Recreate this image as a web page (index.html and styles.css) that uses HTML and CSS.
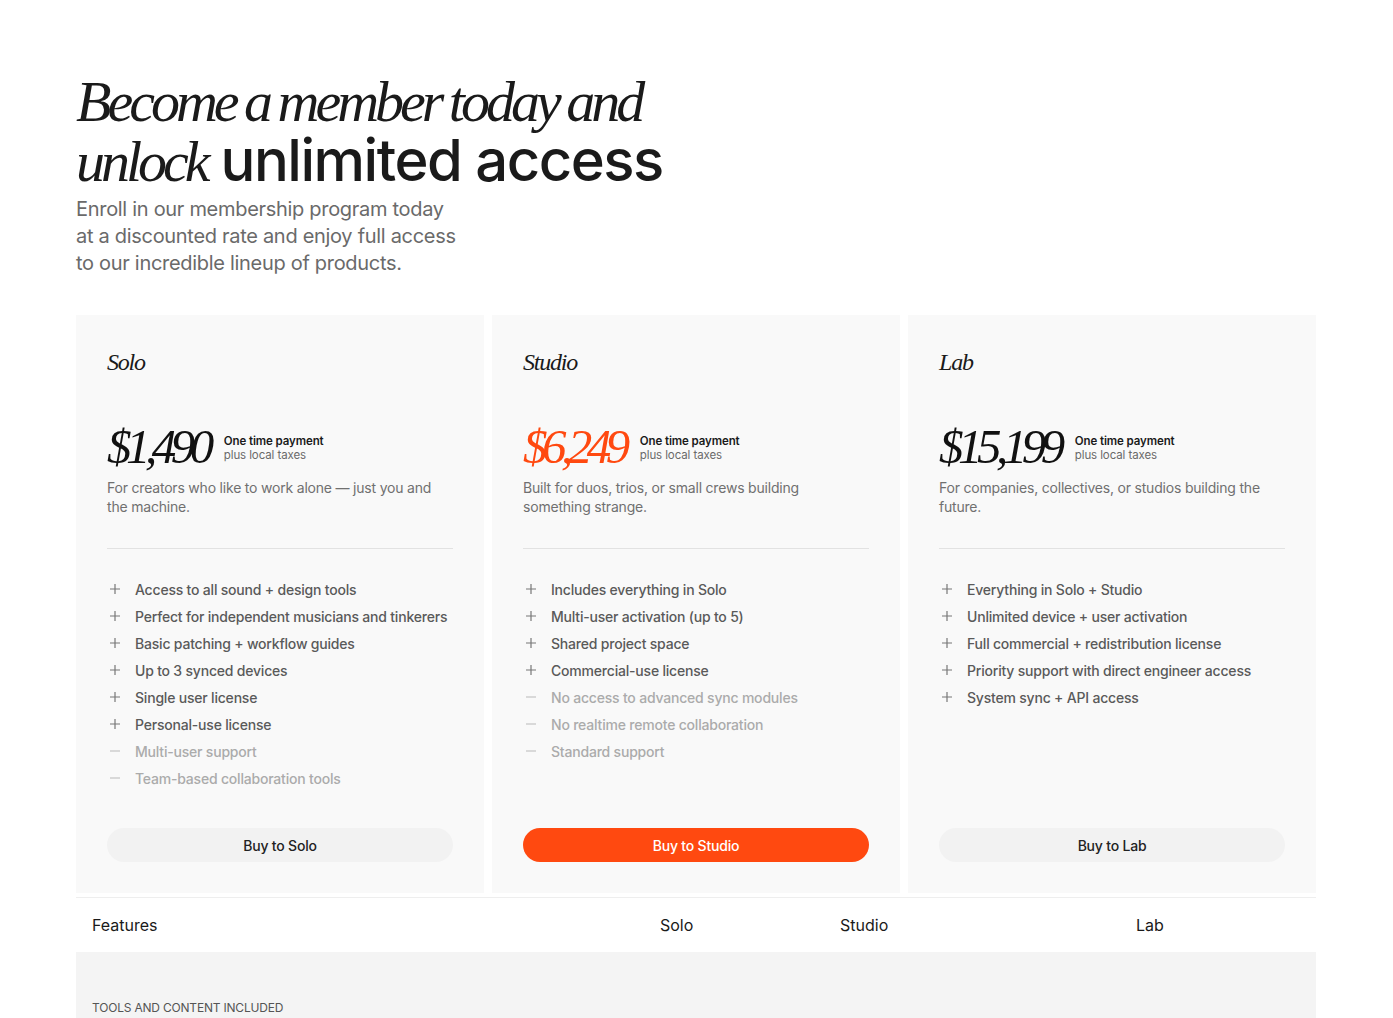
FILE: index.html
```html
<!DOCTYPE html>
<html lang="en">
<head>
<meta charset="utf-8">
<title>Membership</title>
<link rel="stylesheet" href="styles.css">
</head>
<body>
<main class="page">
  <header class="hero">
    <h1 class="hero-title"><span class="serif">Become a member today and</span><br><span class="serif">unlock</span> unlimited access</h1>
    <p class="hero-sub">Enroll in our membership program today<br>at a discounted rate and enjoy full access<br>to our incredible lineup of products.</p>
  </header>

  <section class="plans">
    <article class="plan">
      <h2 class="plan-name">Solo</h2>
      <div class="price-row">
        <span class="price">$1,490</span>
        <div class="price-note"><strong>One time payment</strong><span>plus local taxes</span></div>
      </div>
      <p class="plan-desc">For creators who like to work alone — just you and the machine.</p>
      <hr class="divider">
      <ul class="features">
        <li class="yes"><span class="ico"><svg viewBox="0 0 10 10"><path d="M5 0v10M0 5h10"/></svg></span>Access to all sound + design tools</li>
        <li class="yes"><span class="ico"><svg viewBox="0 0 10 10"><path d="M5 0v10M0 5h10"/></svg></span>Perfect for independent musicians and tinkerers</li>
        <li class="yes"><span class="ico"><svg viewBox="0 0 10 10"><path d="M5 0v10M0 5h10"/></svg></span>Basic patching + workflow guides</li>
        <li class="yes"><span class="ico"><svg viewBox="0 0 10 10"><path d="M5 0v10M0 5h10"/></svg></span>Up to 3 synced devices</li>
        <li class="yes"><span class="ico"><svg viewBox="0 0 10 10"><path d="M5 0v10M0 5h10"/></svg></span>Single user license</li>
        <li class="yes"><span class="ico"><svg viewBox="0 0 10 10"><path d="M5 0v10M0 5h10"/></svg></span>Personal-use license</li>
        <li class="no"><span class="ico"><svg viewBox="0 0 10 10"><path d="M0 5h10"/></svg></span>Multi-user support</li>
        <li class="no"><span class="ico"><svg viewBox="0 0 10 10"><path d="M0 5h10"/></svg></span>Team-based collaboration tools</li>
      </ul>
      <button class="buy">Buy to Solo</button>
    </article>

    <article class="plan">
      <h2 class="plan-name">Studio</h2>
      <div class="price-row">
        <span class="price accent">$6,249</span>
        <div class="price-note"><strong>One time payment</strong><span>plus local taxes</span></div>
      </div>
      <p class="plan-desc">Built for duos, trios, or small crews building something strange.</p>
      <hr class="divider">
      <ul class="features">
        <li class="yes"><span class="ico"><svg viewBox="0 0 10 10"><path d="M5 0v10M0 5h10"/></svg></span>Includes everything in Solo</li>
        <li class="yes"><span class="ico"><svg viewBox="0 0 10 10"><path d="M5 0v10M0 5h10"/></svg></span>Multi-user activation (up to 5)</li>
        <li class="yes"><span class="ico"><svg viewBox="0 0 10 10"><path d="M5 0v10M0 5h10"/></svg></span>Shared project space</li>
        <li class="yes"><span class="ico"><svg viewBox="0 0 10 10"><path d="M5 0v10M0 5h10"/></svg></span>Commercial-use license</li>
        <li class="no"><span class="ico"><svg viewBox="0 0 10 10"><path d="M0 5h10"/></svg></span>No access to advanced sync modules</li>
        <li class="no"><span class="ico"><svg viewBox="0 0 10 10"><path d="M0 5h10"/></svg></span>No realtime remote collaboration</li>
        <li class="no"><span class="ico"><svg viewBox="0 0 10 10"><path d="M0 5h10"/></svg></span>Standard support</li>
      </ul>
      <button class="buy primary">Buy to Studio</button>
    </article>

    <article class="plan">
      <h2 class="plan-name">Lab</h2>
      <div class="price-row">
        <span class="price">$15,199</span>
        <div class="price-note"><strong>One time payment</strong><span>plus local taxes</span></div>
      </div>
      <p class="plan-desc">For companies, collectives, or studios building the future.</p>
      <hr class="divider">
      <ul class="features">
        <li class="yes"><span class="ico"><svg viewBox="0 0 10 10"><path d="M5 0v10M0 5h10"/></svg></span>Everything in Solo + Studio</li>
        <li class="yes"><span class="ico"><svg viewBox="0 0 10 10"><path d="M5 0v10M0 5h10"/></svg></span>Unlimited device + user activation</li>
        <li class="yes"><span class="ico"><svg viewBox="0 0 10 10"><path d="M5 0v10M0 5h10"/></svg></span>Full commercial + redistribution license</li>
        <li class="yes"><span class="ico"><svg viewBox="0 0 10 10"><path d="M5 0v10M0 5h10"/></svg></span>Priority support with direct engineer access</li>
        <li class="yes"><span class="ico"><svg viewBox="0 0 10 10"><path d="M5 0v10M0 5h10"/></svg></span>System sync + API access</li>
      </ul>
      <button class="buy">Buy to Lab</button>
    </article>
  </section>

  <section class="compare">
    <div class="compare-head">
      <div class="cell">Features</div>
      <div class="cell">Solo</div>
      <div class="cell">Studio</div>
      <div class="cell">Lab</div>
    </div>
    <div class="compare-group">Tools and content included</div>
  </section>
</main>
</body>
</html>
```

FILE: styles.css
```css
* { box-sizing: border-box; }
html, body { margin: 0; padding: 0; background: #ffffff; }
body {
  font-family: Inter, "Noto Sans", "Liberation Sans", sans-serif;
  color: #1a1a1a;
}
.page {
  width: 1240px;
  margin-left: 76px;
  padding-top: 71px;
}

.hero-title {
  margin: 0;
  font-family: Inter, "Liberation Sans", sans-serif;
  font-weight: 500;
  font-size: 58px;
  line-height: 58px;
  letter-spacing: -1.5px;
  color: #1a1a1a;
}
.hero-title .serif {
  font-family: "Liberation Serif", serif;
  font-style: italic;
  font-weight: 400;
  letter-spacing: -4px;
  word-spacing: -2px;
}
.hero-sub {
  margin: 5px 0 0;
  font-size: 20px;
  line-height: 27px;
  letter-spacing: -0.3px;
  color: #6a6a6a;
}

.plans {
  margin-top: 38px;
  display: grid;
  grid-template-columns: repeat(3, 1fr);
  gap: 8px;
}
.plan {
  background: #f9f9f9;
  padding: 31px 31px 31px;
  display: flex;
  flex-direction: column;
}
.plan-name {
  margin: 0;
  font-family: "Liberation Serif", serif;
  font-style: italic;
  font-weight: 400;
  font-size: 24px;
  line-height: 32px;
  letter-spacing: -1.2px;
  color: #1a1a1a;
}
.price-row {
  margin-top: 43px;
  display: flex;
  align-items: center;
  gap: 15px;
}
.price {
  font-family: "Liberation Serif", serif;
  font-style: italic;
  font-size: 49px;
  line-height: 52px;
  letter-spacing: -5.5px;
  color: #111;
  padding-right: 0;
}
.price.accent { color: #ff4910; }
.price-note {
  display: flex;
  flex-direction: column;
  font-size: 11.5px;
  line-height: 14px;
  letter-spacing: -0.1px;
  padding-top: 2px;
}
.price-note strong { font-weight: 600; color: #1a1a1a; }
.price-note span { color: #6a6a6a; }
.plan-desc {
  margin: 5px 0 0;
  font-size: 14px;
  line-height: 19px;
  letter-spacing: -0.2px;
  color: #707070;
  padding-right: 10px;
}
.divider {
  margin: 32px 0 0;
  border: 0;
  height: 1px;
  background: #e2e2e2;
}
.features {
  list-style: none;
  margin: 27px 0 0;
  padding: 0;
}
.features li {
  display: flex;
  align-items: center;
  gap: 12px;
  font-size: 14px;
  line-height: 27px;
  letter-spacing: -0.2px;
  font-weight: 500;
  white-space: nowrap;
}
.features .ico {
  width: 16px;
  display: flex;
  justify-content: center;
}
.features svg {
  width: 10px;
  height: 10px;
  fill: none;
  stroke: currentColor;
  stroke-width: 1.2;
  margin-top: -2px;
}
.features .yes { color: #5a5a5a; }
.features .yes .ico { color: #777; }
.features .no { color: #ababab; }
.features .no .ico { color: #c4c4c4; }

.buy {
  margin-top: auto;
  height: 34px;
  width: 100%;
  border: 0;
  border-radius: 17px;
  background: #f2f2f2;
  font-family: Inter, "Liberation Sans", sans-serif;
  font-size: 14px;
  font-weight: 500;
  letter-spacing: -0.2px;
  color: #222;
}
.plan .features { margin-bottom: 36px; }
.buy.primary { background: #ff4910; color: #fff; }

.compare {
  margin-top: 4px;
  border-top: 1px solid #eeeeee;
}
.compare-head {
  display: grid;
  grid-template-columns: 568px 180px 296px 1fr;
  height: 54px;
  align-items: center;
  font-size: 16px;
  color: #1a1a1a;
}
.compare-head .cell { padding-left: 16px; }
.compare-group {
  background: #f4f4f4;
  padding: 48px 16px 30px;
  font-size: 12px;
  text-transform: uppercase;
  color: #555;
  letter-spacing: -0.2px;
}
```
